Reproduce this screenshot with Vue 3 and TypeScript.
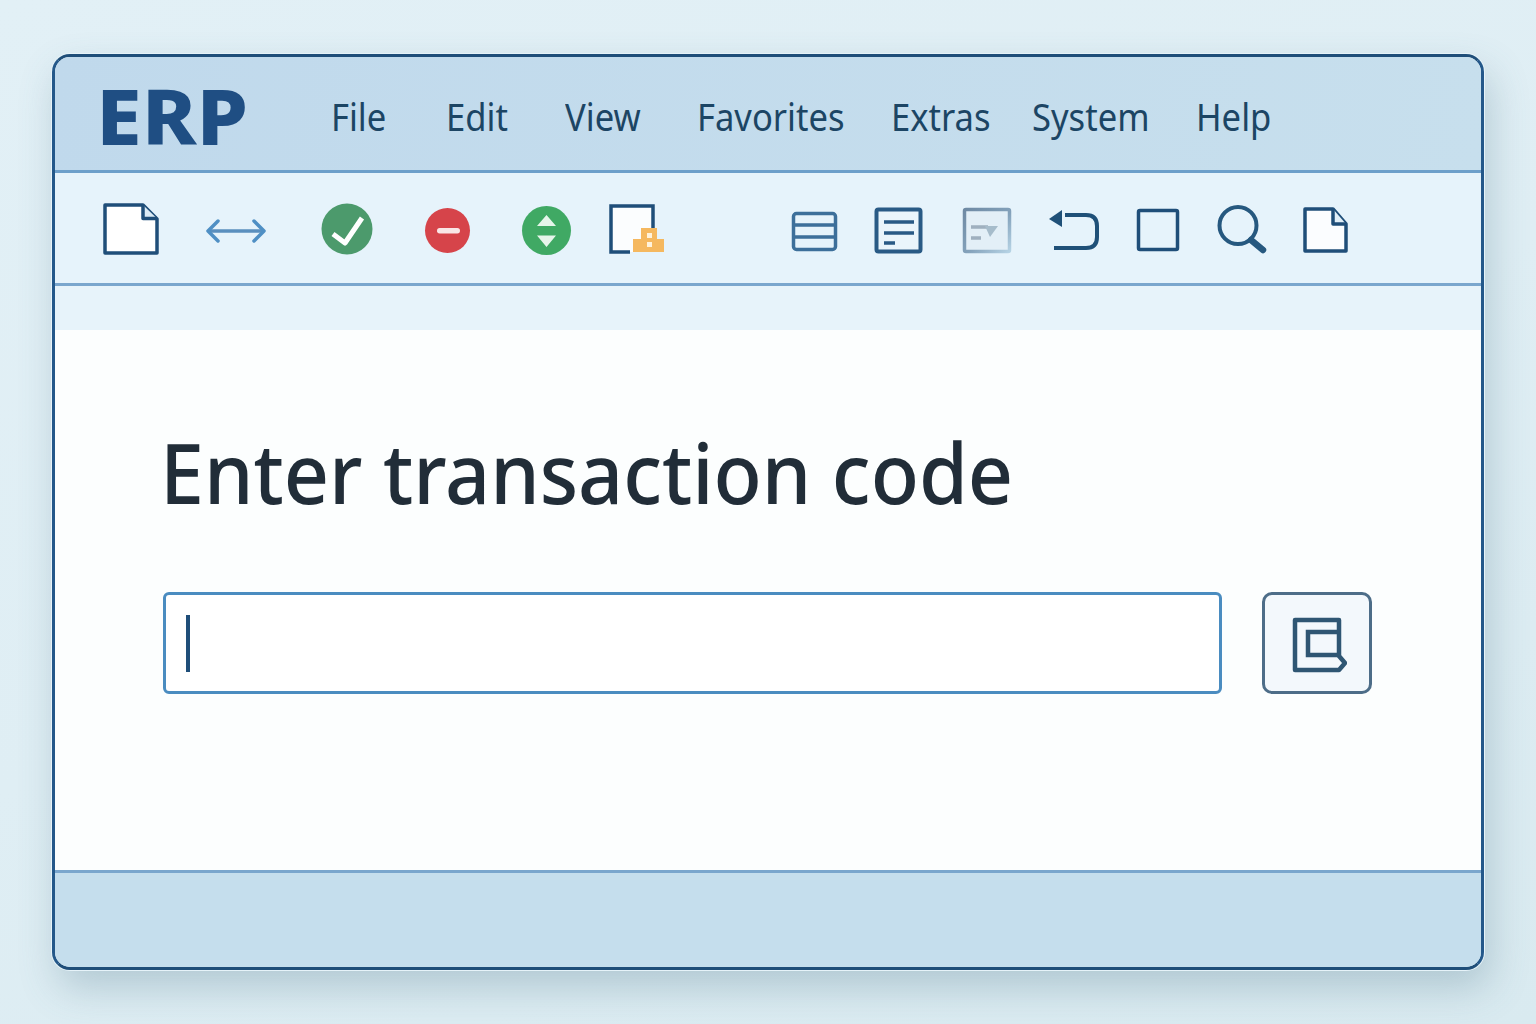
<template>
  <div class="page">
    <div class="window">
      <header class="menubar">
        <span class="logo">ERP</span>
        <nav class="menu">
          <span v-for="item in menu" :key="item" class="menu-item">{{ item }}</span>
        </nav>
      </header>

      <div class="toolbar">
        <svg class="icon w-doc" viewBox="100 199 102 64">
          <path class="ink" d="M105 205H143L157 219V253H105Z" fill="#fff" />
          <path class="ink" d="M143 205V218.500H157" fill="#dcebf5" />
        </svg>
        <svg class="icon w-arrow" viewBox="202 199 116 64">
          <path d="M209 231H263" fill="none" stroke="#5a8fbe" stroke-width="3.500" />
          <path d="M218 221L208 231L218 241M254 221L264 231L254 241" fill="none" stroke="#4f8fc4" stroke-width="3.500" stroke-linecap="round" stroke-linejoin="round" />
        </svg>
        <svg class="icon w-ok" viewBox="318 199 103 64">
          <circle cx="347" cy="229" r="25.500" fill="#4c9a6c" />
          <path d="M333 234L345 243L362 218" fill="none" stroke="#fff" stroke-width="5" stroke-linejoin="round" />
        </svg>
        <svg class="icon w-stop" viewBox="421 199 97 64">
          <circle cx="447.500" cy="230.500" r="22.500" fill="#d6444a" />
          <rect x="437" y="228" width="23" height="5.500" rx="2.700" fill="#f9e6e6" />
        </svg>
        <svg class="icon w-updown" viewBox="518 199 89 64">
          <circle cx="546.500" cy="230.500" r="24.500" fill="#40a964" />
          <path d="M546.500 215L556 226H537Z M537 235.500H556L546.500 247Z" fill="#e6f5ea" />
        </svg>
        <svg class="icon w-box" viewBox="607 199 181 64">
          <path d="M611 206H653V252H611Z" fill="#fbfdfe" />
          <path d="M653 232V206H611V252H630" fill="none" stroke="#1f4e79" stroke-width="3.500" />
          <path d="M641 228H657V239H664V252H633V239H641Z" fill="#f5b85f" />
          <path d="M647 233H652V238H647ZM647 242H652V247H647Z" fill="#fff3dc" />
        </svg>
        <svg class="icon w-table" viewBox="788 199 83 64">
          <rect x="793.500" y="213.500" width="42" height="36" rx="3" fill="none" stroke="#3d6f9a" stroke-width="3.500" />
          <path d="M794 225H835M794 237H835" stroke="#3d6f9a" stroke-width="3.500" />
        </svg>
        <svg class="icon w-list" viewBox="871 199 88 64">
          <rect x="876.500" y="209.500" width="44" height="42" rx="2" fill="#eaf5fb" stroke="#295a85" stroke-width="4" />
          <path d="M884 222H914M884 233H914M884 243H895" stroke="#295a85" stroke-width="3.500" />
        </svg>
        <svg class="icon w-faded" viewBox="959 199 86 64">
          <defs>
            <linearGradient id="faded" x1="0" y1="0" x2="1" y2="1">
              <stop offset="0" stop-color="#6f8aa4" />
              <stop offset="0.550" stop-color="#84a2bb" />
              <stop offset="1" stop-color="#b5d2e4" />
            </linearGradient>
          </defs>
          <rect x="964.500" y="209.500" width="45" height="42" rx="1.500" fill="#e3eff7" stroke="url(#faded)" stroke-width="3.500" />
          <path d="M971 227H988M971 238H981" stroke="#9fb0bf" stroke-width="3.500" />
          <path d="M985 226H998L990 237Z" fill="#a6bccb" />
        </svg>
        <svg class="icon w-back" viewBox="1045 199 89 64">
          <path d="M1049 219L1062 210V227Z" fill="#1f5078" />
          <path d="M1065 215H1086Q1097 215 1097 226V237Q1097 248 1086 248H1054" fill="none" stroke="#1f5078" stroke-width="4" />
        </svg>
        <svg class="icon w-square" viewBox="1134 199 80 64">
          <rect x="1138.500" y="210.500" width="39" height="39" rx="1.500" fill="none" stroke="#1f4e79" stroke-width="3.500" />
        </svg>
        <svg class="icon w-search" viewBox="1214 199 86 64">
          <circle cx="1238" cy="225.500" r="18.500" fill="none" stroke="#26587f" stroke-width="4" />
          <path d="M1251 240L1263 250" stroke="#26587f" stroke-width="6.500" stroke-linecap="round" />
        </svg>
        <svg class="icon w-doc2" viewBox="1300 199 50 64">
          <path class="ink" d="M1305 209H1333L1346 224V251H1305Z" fill="#fbfdff" />
          <path class="ink" d="M1333 209V224H1346" fill="#e1eff8" />
        </svg>
      </div>

      <div class="strip"></div>

      <main class="content">
        <h1 class="title">Enter transaction code</h1>
        <div class="entry">
          <div class="field"><span class="caret"></span></div>
          <button class="go" type="button">
            <svg class="go-icon" viewBox="1287 612 60 60">
              <path d="M1295 619H1339V655L1345 662L1339 669H1295Z" fill="none" stroke="#2f5673" stroke-width="4.500" stroke-linejoin="round" />
              <path d="M1339 654H1308V631H1339" fill="none" stroke="#2f5673" stroke-width="4.500" />
            </svg>
          </button>
        </div>
      </main>

      <footer class="statusbar"></footer>
    </div>
  </div>
</template>

<script setup lang="ts">
const menu: string[] = ["File", "Edit", "View", "Favorites", "Extras", "System", "Help"];
</script>

<style>
body {
  margin: 0;
}
</style>

<style scoped>
.page {
  box-sizing: border-box;
  width: 1536px;
  height: 1024px;
  padding: 54px 52px;
  overflow: hidden;
  background: linear-gradient(160deg, #e2f0f6 0%, #dfeef4 50%, #d9eaf0 100%);
  font-family: "Noto Sans", sans-serif;
}

.window {
  box-sizing: border-box;
  display: flex;
  flex-direction: column;
  height: 916px;
  overflow: hidden;
  border: 3px solid #24588a;
  border-top-color: #1f4e79;
  border-bottom-color: #1f4e79;
  border-radius: 18px;
  box-shadow: 0 0 0 1px #e6f3f9, 6px 18px 38px rgba(80, 120, 140, 0.3);
}

.menubar {
  display: flex;
  align-items: center;
  height: 116px;
  flex: none;
  padding: 4px 0 0 41px;
  background: linear-gradient(100deg, #c0d9ec 0%, #c7dfed 100%);
  border-bottom: 3px solid #6d9fca;
  box-sizing: border-box;
}

.logo {
  width: 235px;
  font-size: 77px;
  font-weight: 800;
  line-height: 1;
  color: #1f4e83;
  transform: scaleX(1.07);
  transform-origin: left center;
}

.menu {
  display: grid;
  grid-template-columns: 115px 119px 132px 194px 141px 164px auto;
  align-items: center;
}

.menu-item {
  font-size: 38px;
  color: #1c4564;
  transform: scaleX(0.91);
  transform-origin: left center;
  white-space: nowrap;
}

.toolbar {
  display: flex;
  align-items: center;
  flex: none;
  box-sizing: border-box;
  height: 113px;
  padding: 6px 0 0 45px;
  background: #e6f3fb;
  border-bottom: 3px solid #7aa6cd;
}

.icon {
  display: block;
  flex: none;
  height: 64px;
}

.ink {
  stroke: #1f4e79;
  stroke-width: 3.5;
  stroke-linejoin: round;
}

.w-doc { width: 102px; }
.w-arrow { width: 116px; }
.w-ok { width: 103px; }
.w-stop { width: 97px; }
.w-updown { width: 89px; }
.w-box { width: 181px; }
.w-table { width: 83px; }
.w-list { width: 88px; }
.w-faded { width: 86px; }
.w-back { width: 89px; }
.w-square { width: 80px; }
.w-search { width: 86px; }
.w-doc2 { width: 50px; }

.strip {
  flex: none;
  height: 44px;
  background: #e7f3fa;
}

.content {
  flex: 1;
  padding: 87px 109px 0 105px;
  background: #fcfefe;
}

.title {
  margin: 0;
  font-size: 84px;
  font-weight: 500;
  line-height: 110px;
  color: #212d38;
  transform: scaleX(0.94);
  transform-origin: left center;
  white-space: nowrap;
}

.entry {
  display: flex;
  gap: 40px;
  margin: 65px 0 0 3px;
}

.field {
  flex: 1;
  box-sizing: border-box;
  height: 102px;
  display: flex;
  align-items: center;
  padding-left: 20px;
  background: #fff;
  border: 3.5px solid #4a8cc0;
  border-radius: 6px;
}

.caret {
  width: 4px;
  height: 57px;
  background: #1f4e79;
}

.go {
  flex: none;
  box-sizing: border-box;
  width: 110px;
  height: 102px;
  padding: 0;
  display: flex;
  align-items: center;
  justify-content: center;
  background: #f3f8fc;
  border: 3.5px solid #4d6d88;
  border-radius: 10px;
}

.go-icon {
  width: 60px;
  height: 60px;
}

.statusbar {
  flex: none;
  height: 97px;
  box-sizing: border-box;
  background: #c5deed;
  border-top: 3px solid #7aa6cd;
}
</style>
